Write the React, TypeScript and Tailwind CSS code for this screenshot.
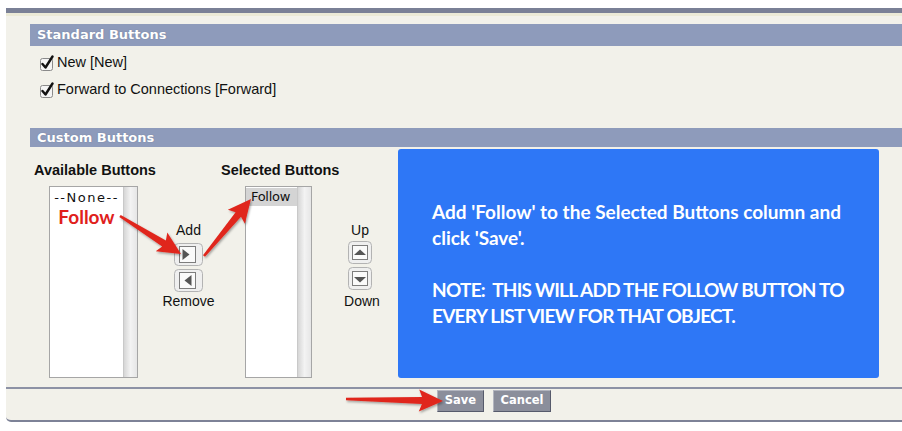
import React from 'react';

type Pt = [number, number];

// tapered arrow polygon in page coordinates
function arrowPoints(from: Pt, to: Pt, tail = 2, neck = 6, headLen = 20, headW = 20): string {
  const [x1, y1] = from;
  const [x2, y2] = to;
  const dx = x2 - x1;
  const dy = y2 - y1;
  const len = Math.sqrt(dx * dx + dy * dy);
  const ux = dx / len;
  const uy = dy / len;
  const nx = -uy;
  const ny = ux;
  const bx = x2 - ux * headLen;
  const by = y2 - uy * headLen;
  const nbx = bx + ux * 3;
  const nby = by + uy * 3;
  const p = (x: number, y: number) => `${x.toFixed(1)},${y.toFixed(1)}`;
  return [
    p(x1 + (nx * tail) / 2, y1 + (ny * tail) / 2),
    p(nbx + (nx * neck) / 2, nby + (ny * neck) / 2),
    p(bx + (nx * headW) / 2, by + (ny * headW) / 2),
    p(x2, y2),
    p(bx - (nx * headW) / 2, by - (ny * headW) / 2),
    p(nbx - (nx * neck) / 2, nby - (ny * neck) / 2),
    p(x1 - (nx * tail) / 2, y1 - (ny * tail) / 2),
  ].join(' ');
}

const Checkbox = () => (
  <svg width="15" height="16" viewBox="0 0 15 16" className="shrink-0">
    <rect x="0.5" y="3.5" width="12" height="12" rx="2" fill="#f4f4f4" stroke="#8a8a8a" />
    <path d="M2.5 9 L5.5 12.5 L12.5 1.5" fill="none" stroke="#111" strokeWidth="2.4" strokeLinecap="round" strokeLinejoin="round" />
  </svg>
);

const ArrowButton = ({ dir }: { dir: 'right' | 'left' | 'up' | 'down' }) => {
  const tri = {
    right: 'M9 6 L16 11.5 L9 17 Z',
    left: 'M18 6 L11 11.5 L18 17 Z',
    up: 'M6 13 L12 7.5 L18 13 Z',
    down: 'M6 9 L12 14.5 L18 9 Z',
  }[dir];
  const horiz = dir === 'right' || dir === 'left';
  return horiz ? (
    <svg width="29" height="23" viewBox="0 0 29 23">
      <rect x="0.5" y="0.5" width="28" height="22" rx="4" fill="#efefef" stroke="#b3b3b3" />
      <rect x="5.5" y="3.5" width="16" height="16" fill="#fafafa" stroke="#7d7d7d" />
      <path d={tri} fill="#555" transform="translate(-0.5 0)" />
    </svg>
  ) : (
    <svg width="24" height="23" viewBox="0 0 24 23">
      <rect x="0.5" y="0.5" width="23" height="22" rx="4" fill="#efefef" stroke="#b3b3b3" />
      <rect x="4.5" y="4.5" width="15" height="14" fill="#fafafa" stroke="#7d7d7d" />
      <path d={tri} fill="#555" transform="translate(0 1)" />
    </svg>
  );
};

const ListBox = ({ width, children }: { width: string; children?: React.ReactNode }) => (
  <div className={`${width} h-[192px] flex border border-[#a6a6a6] bg-white`}>
    <div className="flex-1 flex flex-col">{children}</div>
    <div className="w-[14px] border-l border-[#c9c9c9] bg-gradient-to-r from-[#d6d6d6] via-[#f3f3f3] to-[#e6e6e6]" />
  </div>
);

export default function App() {
  return (
    <div className="relative w-[902px] h-[431px] overflow-hidden bg-white font-['Liberation_Sans',Arial,sans-serif] text-[#111]">
      <div className="ml-[6px] pt-[8px]">
        <div className="h-[5px] bg-[#7a8096]" />
        <div className="h-[3px] bg-[#ebe9d6]" />
        <div className="h-[406px] bg-[#f2f1ea] rounded-bl-[5px] border-b-2 border-[#7d8297] pt-[8px]">
          <div className="ml-[24px] h-[22px] bg-[#8e9bbb] pl-[7px] text-white font-bold text-[13px] leading-[22px] font-['DejaVu_Sans',Verdana,sans-serif] [text-shadow:0_0_1px_rgba(60,70,100,0.5)]">
            Standard Buttons
          </div>
          <div className="ml-[34px] mt-[9px] flex flex-col gap-[11px] text-[14.5px]">
            <div className="h-[16px] flex items-center gap-[2px]">
              <Checkbox />
              <span>New [New]</span>
            </div>
            <div className="h-[16px] flex items-center gap-[2px]">
              <Checkbox />
              <span>Forward to Connections [Forward]</span>
            </div>
          </div>
          <div className="mt-[30px] ml-[24px] h-[19px] bg-[#8e9bbb] pl-[7px] text-white font-bold text-[13px] leading-[19px] font-['DejaVu_Sans',Verdana,sans-serif] [text-shadow:0_0_1px_rgba(60,70,100,0.5)]">
            Custom Buttons
          </div>
          <div className="flex h-[240px] pl-[28px]">
            <div className="w-[126px] flex flex-col">
              <div className="pt-[15px] leading-[16px] text-[14.5px] font-bold whitespace-nowrap">Available Buttons</div>
              <div className="mt-[8px] ml-[15px]">
                <ListBox width="w-[89px]">
                  <div className="pt-[3px] text-center text-[13px] leading-[16px] tracking-[1.5px] font-['DejaVu_Sans',sans-serif]">--None--</div>
                  <div className="text-center text-[19px] leading-[21px] font-bold text-[#e0201c] font-['Lato',sans-serif]">Follow</div>
                </ListBox>
              </div>
            </div>
            <div className="w-[57px] flex flex-col items-center pt-[75px] text-[14px]">
              <div className="leading-[16px]">Add</div>
              <div className="mt-[5px]"><ArrowButton dir="right" /></div>
              <div className="mt-[3px]"><ArrowButton dir="left" /></div>
              <div className="mt-[1px] leading-[16px]">Remove</div>
            </div>
            <div className="w-[123px] flex flex-col pl-[4px]">
              <div className="pt-[15px] leading-[16px] text-[14.5px] font-bold whitespace-nowrap">Selected Buttons</div>
              <div className="mt-[8px] ml-[24px]">
                <ListBox width="w-[67px]">
                  <div className="mt-[1px] h-[18px] bg-[#d4d4d4] pl-[5px] text-[13px] leading-[18px] font-['DejaVu_Sans',sans-serif] tracking-[-0.3px]">Follow</div>
                </ListBox>
              </div>
            </div>
            <div className="w-[40px] flex flex-col items-center pt-[75px] text-[14px]">
              <div className="leading-[16px]">Up</div>
              <div className="mt-[3px]"><ArrowButton dir="up" /></div>
              <div className="mt-[3px]"><ArrowButton dir="down" /></div>
              <div className="mt-[3px] leading-[16px] pl-[4px]">Down</div>
            </div>
            <div className="ml-[18px] mt-[2px] w-[481px] h-[229px] rounded-[3px] bg-[#2e77f6] flex items-center pl-[34px] text-white font-bold text-[19px] leading-[26px] font-['Lato',sans-serif] whitespace-nowrap">
              <div>
                <p>Add 'Follow' to the Selected Buttons column and<br />click 'Save'.</p>
                <p className="mt-[26px] tracking-[-0.75px]">NOTE:&nbsp; THIS WILL ADD THE FOLLOW BUTTON TO<br />EVERY LIST VIEW FOR THAT OBJECT.</p>
              </div>
            </div>
          </div>
          <div className="h-[2px] bg-[#8d92a5]" />
          <div className="flex gap-[9px] pl-[431px] pt-[1px] text-white font-bold text-[11.5px] font-['DejaVu_Sans',Verdana,sans-serif] [text-shadow:0_0_1px_rgba(40,40,60,0.6)]">
            <button className="w-[47px] h-[22px] bg-[#8b8e9b] border border-t-[#b3b5bf] border-l-[#b3b5bf] border-b-[#565a6b] border-r-[#565a6b]">Save</button>
            <button className="w-[58px] h-[22px] bg-[#8b8e9b] border border-t-[#b3b5bf] border-l-[#b3b5bf] border-b-[#565a6b] border-r-[#565a6b]">Cancel</button>
          </div>
        </div>
      </div>
      <svg className="absolute left-0 top-0 pointer-events-none" width="902" height="431" viewBox="0 0 902 431">
        <defs>
          <filter id="sh" x="-20%" y="-20%" width="140%" height="140%">
            <feDropShadow dx="1" dy="1.5" stdDeviation="1" floodColor="#000" floodOpacity="0.35" />
          </filter>
        </defs>
        <g fill="#e0261d" filter="url(#sh)">
          <polygon points={arrowPoints([120, 216], [181, 254], 2.5, 7, 23, 22)} />
          <polygon points={arrowPoints([204, 256], [251, 199], 2.5, 7, 23, 22)} />
          <polygon points={arrowPoints([346, 399], [443, 401], 2.5, 7, 24, 22)} />
        </g>
      </svg>
    </div>
  );
}
